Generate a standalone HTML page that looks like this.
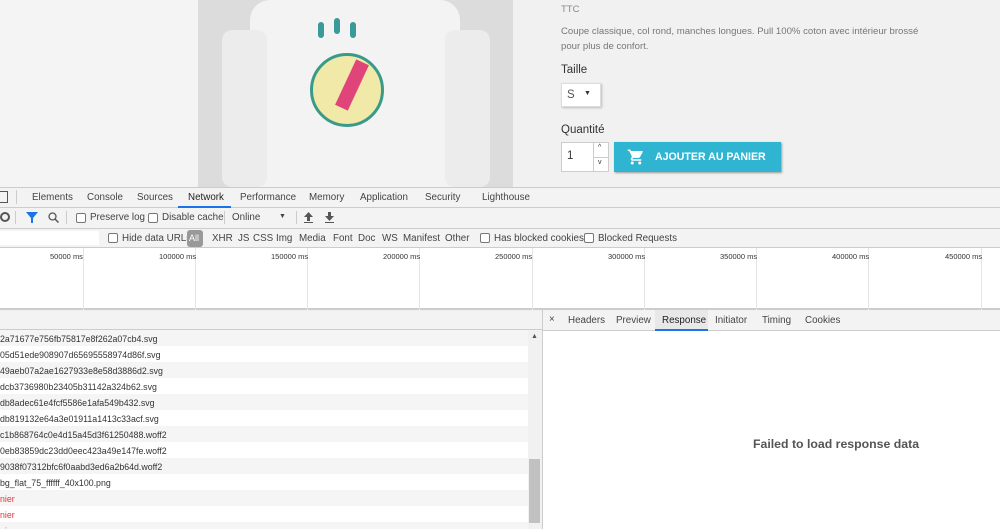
<!DOCTYPE html>
<html><head><style>
*{margin:0;padding:0;box-sizing:border-box}
html,body{width:1000px;height:529px;overflow:hidden}
body{background:#f1f1f1;font-family:"Liberation Sans",sans-serif;position:relative;font-size:12px;color:#333}
.a{position:absolute}
.t{position:absolute;white-space:nowrap}
.dv{font-size:9.8px;color:#444}
.cb{position:absolute;width:10px;height:10px;border:1px solid #777;border-radius:2px;background:#fff}
.g{position:absolute;top:248px;width:1px;height:62px;background:#e5e5e5}
.ms{position:absolute;top:252px;font-size:7.5px;color:#333;white-space:nowrap}
</style></head><body>
<!-- page -->
<div class="a" style="left:0;top:0;width:198px;height:187px;background:#f4f4f4"></div>
<div class="a" style="left:198px;top:0;width:315px;height:187px;background:#dcdcdc"></div>
<div class="a" style="left:250px;top:0;width:210px;height:187px;background:#f3f3f3;border-radius:20px 20px 0 0"></div>
<div class="a" style="left:222px;top:30px;width:45px;height:157px;background:#ececec;border-radius:10px"></div>
<div class="a" style="left:445px;top:30px;width:45px;height:157px;background:#ececec;border-radius:10px"></div>
<div class="a" style="left:310px;top:53px;width:74px;height:74px;border-radius:50%;background:#f1e9a8;border:3px solid #3a9a8a"></div>
<div class="a" style="left:345px;top:60px;width:14px;height:50px;background:#e0457a;transform:rotate(25deg)"></div>
<div class="a" style="left:318px;top:22px;width:6px;height:16px;background:#3a9a9a;border-radius:3px"></div>
<div class="a" style="left:334px;top:18px;width:6px;height:16px;background:#3a9a9a;border-radius:3px"></div>
<div class="a" style="left:350px;top:22px;width:6px;height:16px;background:#3a9a9a;border-radius:3px"></div>
<div class="t" style="left:561px;top:4px;font-size:9.5px;color:#888">TTC</div>
<div class="t" style="left:561px;top:24px;font-size:9.6px;color:#777;line-height:15px">Coupe classique, col rond, manches longues. Pull 100% coton avec intérieur brossé<br>pour plus de confort.</div>
<div class="t" style="left:561px;top:64px;font-size:11.5px;color:#333">Taille</div>
<div class="a" style="left:561px;top:83px;width:40px;height:24px;background:#fff;border:1px solid #ddd;box-shadow:1px 1px 2px #bbb"></div>
<div class="t" style="left:567px;top:89px;font-size:11.5px;color:#555">S</div>
<div class="t" style="left:584px;top:90px;font-size:7px">▼</div>
<div class="t" style="left:561px;top:124px;font-size:11.5px;color:#333">Quantité</div>
<div class="a" style="left:561px;top:142px;width:48px;height:30px;background:#fff;border:1px solid #ccc"></div>
<div class="a" style="left:593px;top:142px;width:1px;height:30px;background:#ccc"></div>
<div class="a" style="left:593px;top:157px;width:16px;height:1px;background:#ccc"></div>
<div class="t" style="left:567px;top:150px;font-size:11.5px">1</div>
<div class="t" style="left:598px;top:144px;font-size:7px">^</div>
<div class="t" style="left:598px;top:159px;font-size:7px">v</div>
<div class="a" style="left:614px;top:142px;width:167px;height:30px;background:#2fb5d2;box-shadow:1px 1px 2px #999"></div>
<svg class="a" style="left:627px;top:148px" width="18" height="18" viewBox="0 0 24 24"><path fill="#fff" d="M7 18a2 2 0 100 4 2 2 0 000-4zM1 2v2h2l3.6 7.6-1.4 2.4c-.1.3-.2.6-.2 1 0 1.1.9 2 2 2h12v-2H7.4a.25.25 0 01-.25-.25l.9-1.65h7.45c.75 0 1.4-.4 1.75-1l3.6-6.5A1 1 0 0020 4H5.2l-.9-2H1zm16 16a2 2 0 100 4 2 2 0 000-4z"/></svg>
<div class="t" style="left:655px;top:151px;font-size:10.6px;font-weight:bold;color:#fff">AJOUTER AU PANIER</div>
<!-- devtools tabs -->
<div class="a" style="left:0;top:187px;width:1000px;height:21px;background:#f3f3f3;border-top:1px solid #ccc;border-bottom:1px solid #ccc"></div>
<div class="a" style="left:0;top:191px;width:8px;height:12px;border:1px solid #555;border-left:none"></div>
<div class="a" style="left:16px;top:190px;width:1px;height:14px;background:#ccc"></div>
<div class="t dv" style="left:32px;top:192px">Elements</div>
<div class="t dv" style="left:87px;top:192px">Console</div>
<div class="t dv" style="left:137px;top:192px">Sources</div>
<div class="t dv" style="left:188px;top:192px;color:#222">Network</div>
<div class="a" style="left:178px;top:206px;width:53px;height:2px;background:#1a73e8"></div>
<div class="t dv" style="left:240px;top:192px">Performance</div>
<div class="t dv" style="left:309px;top:192px">Memory</div>
<div class="t dv" style="left:360px;top:192px">Application</div>
<div class="t dv" style="left:425px;top:192px">Security</div>
<div class="t dv" style="left:482px;top:192px">Lighthouse</div>
<!-- toolbar -->
<div class="a" style="left:0;top:208px;width:1000px;height:21px;background:#f3f3f3;border-bottom:1px solid #ccc"></div>
<div class="a" style="left:0;top:212px;width:10px;height:10px;border:2px solid #555;border-radius:50%"></div>
<div class="a" style="left:15px;top:211px;width:1px;height:13px;background:#ccc"></div>
<svg class="a" style="left:26px;top:212px" width="12" height="11"><path d="M0 0H12L7 6V11H5V6Z" fill="#1a73e8"/></svg>
<svg class="a" style="left:48px;top:212px" width="11" height="11"><circle cx="4.5" cy="4.5" r="3.5" fill="none" stroke="#555" stroke-width="1.3"/><path d="M7 7L10.5 10.5" stroke="#555" stroke-width="1.5"/></svg>
<div class="a" style="left:66px;top:211px;width:1px;height:13px;background:#ccc"></div>
<div class="cb" style="left:76px;top:213px"></div>
<div class="t dv" style="left:90px;top:212px">Preserve log</div>
<div class="cb" style="left:148px;top:213px"></div>
<div class="t dv" style="left:162px;top:212px">Disable cache</div>
<div class="a" style="left:224px;top:211px;width:1px;height:13px;background:#ccc"></div>
<div class="t dv" style="left:232px;top:212px">Online</div>
<div class="t" style="left:279px;top:213px;font-size:7px;color:#444">▼</div>
<div class="a" style="left:296px;top:211px;width:1px;height:13px;background:#ccc"></div>
<svg class="a" style="left:304px;top:212px" width="9" height="11"><path d="M4.5 0L9 5H6V9H3V5H0Z M0 10H9V11H0Z" fill="#555"/></svg>
<svg class="a" style="left:325px;top:212px" width="9" height="11"><path d="M3 0H6V4H9L4.5 9L0 4H3Z M0 10H9V11H0Z" fill="#555"/></svg>
<!-- filter row -->
<div class="a" style="left:0;top:229px;width:1000px;height:19px;background:#f3f3f3;border-bottom:1px solid #ccc"></div>
<div class="a" style="left:0;top:231px;width:99px;height:14px;background:#fff"></div>
<div class="cb" style="left:108px;top:233px"></div>
<div class="t dv" style="left:122px;top:233px">Hide data URLs</div>
<div class="a" style="left:187px;top:230px;width:16px;height:17px;background:#999;border-radius:3px"></div>
<div class="t dv" style="left:189px;top:233px;color:#fff;font-size:9px">All</div>
<div class="t dv" style="left:212px;top:233px">XHR</div>
<div class="t dv" style="left:238px;top:233px">JS</div>
<div class="t dv" style="left:253px;top:233px">CSS</div>
<div class="t dv" style="left:276px;top:233px">Img</div>
<div class="t dv" style="left:299px;top:233px">Media</div>
<div class="t dv" style="left:333px;top:233px">Font</div>
<div class="t dv" style="left:358px;top:233px">Doc</div>
<div class="t dv" style="left:382px;top:233px">WS</div>
<div class="t dv" style="left:403px;top:233px">Manifest</div>
<div class="t dv" style="left:445px;top:233px">Other</div>
<div class="cb" style="left:480px;top:233px"></div>
<div class="t dv" style="left:494px;top:233px">Has blocked cookies</div>
<div class="cb" style="left:584px;top:233px"></div>
<div class="t dv" style="left:598px;top:233px">Blocked Requests</div>
<!-- timeline -->
<div class="a" style="left:0;top:248px;width:1000px;height:62px;background:#fff;border-bottom:2px solid #ccc"></div>
<div class="g" style="left:83px"></div><div class="g" style="left:195px"></div><div class="g" style="left:307px"></div><div class="g" style="left:419px"></div><div class="g" style="left:532px"></div><div class="g" style="left:644px"></div><div class="g" style="left:756px"></div><div class="g" style="left:868px"></div><div class="g" style="left:981px"></div>
<div class="ms" style="left:50px">50000 ms</div>
<div class="ms" style="left:159px">100000 ms</div>
<div class="ms" style="left:271px">150000 ms</div>
<div class="ms" style="left:383px">200000 ms</div>
<div class="ms" style="left:495px">250000 ms</div>
<div class="ms" style="left:608px">300000 ms</div>
<div class="ms" style="left:720px">350000 ms</div>
<div class="ms" style="left:832px">400000 ms</div>
<div class="ms" style="left:945px">450000 ms</div>
<!-- list -->
<div class="a" style="left:0;top:312px;width:543px;height:217px;background:#fff"></div>
<div class="a" style="left:0;top:312px;width:543px;height:18px;background:#f3f3f3;border-bottom:1px solid #ccc"></div>
<div class="a" style="left:0;top:330px;width:528px;height:199px;background:repeating-linear-gradient(#f5f5f5 0 16px,#fff 16px 32px)"></div>
<div class="a" style="left:528px;top:330px;width:14px;height:199px;background:#f1f1f1"></div>
<div class="a" style="left:529px;top:459px;width:11px;height:64px;background:#c1c1c1"></div>
<div class="t" style="left:531px;top:333px;font-size:7px;color:#555">▲</div>
<div class="a" style="left:542px;top:310px;width:1px;height:219px;background:#ccc"></div>
<div class="t" style="left:0;top:331px;font-size:8.8px;line-height:16px;color:#333">2a71677e756fb75817e8f262a07cb4.svg<br>05d51ede908907d65695558974d86f.svg<br>49aeb07a2ae1627933e8e58d3886d2.svg<br>dcb3736980b23405b31142a324b62.svg<br>db8adec61e4fcf5586e1afa549b432.svg<br>db819132e64a3e01911a1413c33acf.svg<br>c1b868764c0e4d15a45d3f61250488.woff2<br>0eb83859dc23dd0eec423a49e147fe.woff2<br>9038f07312bfc6f0aabd3ed6a2b64d.woff2<br>bg_flat_75_ffffff_40x100.png<br><span style="color:#e33">nier</span><br><span style="color:#e33">nier</span><br><span style="color:#e33">nier</span></div>
<!-- right pane -->
<div class="a" style="left:543px;top:310px;width:457px;height:219px;background:#fff"></div>
<div class="a" style="left:543px;top:310px;width:457px;height:21px;background:#f3f3f3;border-bottom:1px solid #ccc"></div>
<div class="t dv" style="left:549px;top:314px">×</div>
<div class="t dv" style="left:568px;top:315px">Headers</div>
<div class="t dv" style="left:616px;top:315px">Preview</div>
<div class="a" style="left:655px;top:310px;width:53px;height:21px;background:#e8e8e8;border-bottom:2px solid #1a73e8"></div>
<div class="t dv" style="left:662px;top:315px;color:#222">Response</div>
<div class="t dv" style="left:715px;top:315px">Initiator</div>
<div class="t dv" style="left:762px;top:315px">Timing</div>
<div class="t dv" style="left:805px;top:315px">Cookies</div>
<div class="t" style="left:753px;top:437px;font-size:12.3px;font-weight:bold;color:#555">Failed to load response data</div>
</body></html>
